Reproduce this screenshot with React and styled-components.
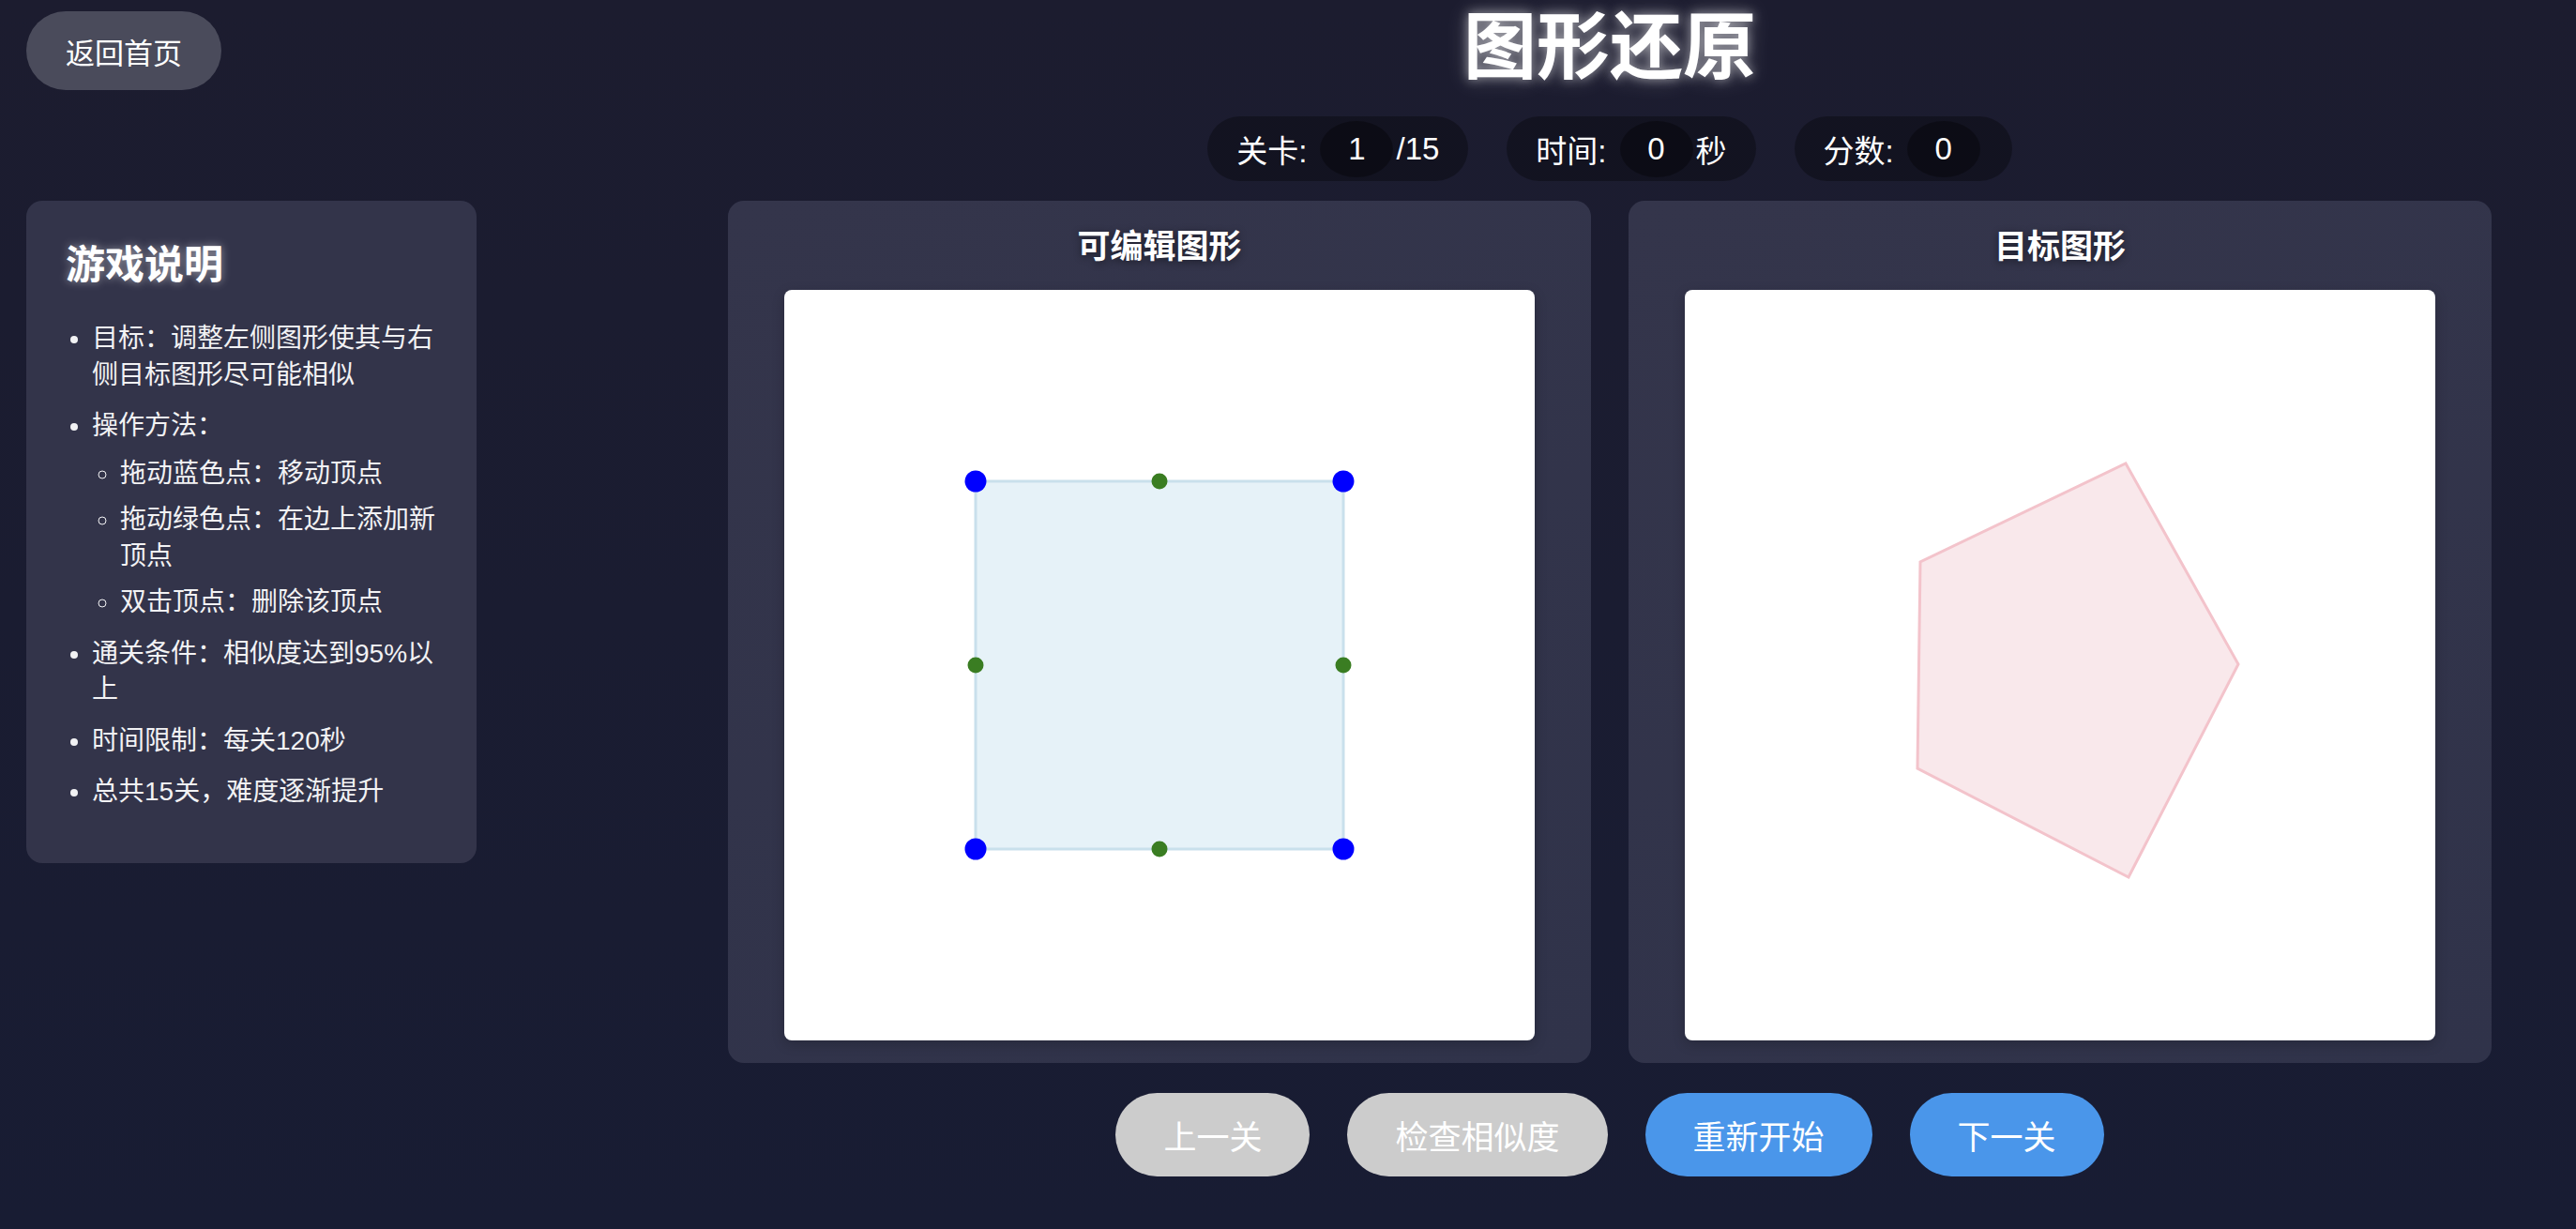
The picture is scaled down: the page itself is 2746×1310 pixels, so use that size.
import styled, { createGlobalStyle } from 'styled-components';

const GlobalStyle = createGlobalStyle`
    html, body {
        margin: 0;
        padding: 0;
    }
    body {
        background: linear-gradient(180deg, #1c1c2f 0%, #181c33 100%);
        min-height: 100vh;
        font-family: "Liberation Sans", "Noto Sans CJK SC", sans-serif;
        color: #ffffff;
    }
`;

const editableVertices = [
    [204, 204],
    [596, 204],
    [596, 596],
    [204, 596],
];

const targetVertices = [
    [470, 185],
    [590, 399],
    [473, 626],
    [248, 510],
    [251, 290],
];

const toPoints = (list) => list.map(p => p.join(',')).join(' ');

function midpoints(list){
    return list.map((p, i) => {
        const q = list[(i + 1) % list.length];
        return [(p[0] + q[0]) / 2, (p[1] + q[1]) / 2];
    });
}

function App(){
    const level = 1;
    const totalLevels = 15;
    const time = 0;
    const score = 0;

    return(
        <>
            <GlobalStyle />
            <Page>
                <BackButton>返回首页</BackButton>
                <Header>
                    <Title>图形还原</Title>
                    <Stats>
                        <StatPill>
                            关卡:<StatValue>{level}</StatValue>/{totalLevels}
                        </StatPill>
                        <StatPill>
                            时间:<StatValue>{time}</StatValue>秒
                        </StatPill>
                        <StatPill>
                            分数:<StatValue>{score}</StatValue>
                        </StatPill>
                    </Stats>
                </Header>

                <Instructions>
                    <InstructionsTitle>游戏说明</InstructionsTitle>
                    <RuleList>
                        <li>目标：调整左侧图形使其与右侧目标图形尽可能相似</li>
                        <li>
                            操作方法：
                            <SubList>
                                <li>拖动蓝色点：移动顶点</li>
                                <li>拖动绿色点：在边上添加新顶点</li>
                                <li>双击顶点：删除该顶点</li>
                            </SubList>
                        </li>
                        <li>通关条件：相似度达到95%以上</li>
                        <li>时间限制：每关120秒</li>
                        <li>总共15关，难度逐渐提升</li>
                    </RuleList>
                </Instructions>

                <Main>
                    <Boards>
                        <Board>
                            <BoardTitle>可编辑图形</BoardTitle>
                            <Canvas>
                                <svg width="800" height="800" viewBox="0 0 800 800">
                                    <polygon
                                        points={toPoints(editableVertices)}
                                        fill="#e6f2f8"
                                        stroke="#c9e0ec"
                                        strokeWidth="3"
                                    />
                                    {midpoints(editableVertices).map((p, i) => (
                                        <circle key={'m' + i} cx={p[0]} cy={p[1]} r="8.5" fill="#3a7d22" />
                                    ))}
                                    {editableVertices.map((p, i) => (
                                        <circle key={'v' + i} cx={p[0]} cy={p[1]} r="11.5" fill="#0000ff" />
                                    ))}
                                </svg>
                            </Canvas>
                        </Board>
                        <Board>
                            <BoardTitle>目标图形</BoardTitle>
                            <Canvas>
                                <svg width="800" height="800" viewBox="0 0 800 800">
                                    <polygon
                                        points={toPoints(targetVertices)}
                                        fill="#f9e8eb"
                                        stroke="#f3c3cb"
                                        strokeWidth="3"
                                    />
                                </svg>
                            </Canvas>
                        </Board>
                    </Boards>
                    <Controls>
                        <ActionButton disabled>上一关</ActionButton>
                        <ActionButton disabled>检查相似度</ActionButton>
                        <ActionButton>重新开始</ActionButton>
                        <ActionButton>下一关</ActionButton>
                    </Controls>
                </Main>
            </Page>
        </>
    );
}

const Page = styled.div`
    display: grid;
    grid-template-columns: 480px 1fr;
    align-content: start;
    column-gap: 206px;
    row-gap: 21px;
    padding: 12px 28px 0 28px;
    min-height: 100vh;
    box-sizing: border-box;
`;

const BackButton = styled.button`
    align-self: start;
    justify-self: start;
    height: 84px;
    padding: 0 42px;
    border: none;
    border-radius: 42px;
    background-color: #4a4b5b;
    color: #ffffff;
    font-family: "Liberation Sans", "Noto Sans CJK SC", sans-serif;
    font-size: 31px;
    cursor: pointer;
`;

const Header = styled.div`
    display: flex;
    flex-direction: column;
    align-items: center;
`;

const Title = styled.h1`
    margin: 0;
    font-size: 78px;
    line-height: 78px;
    font-weight: bold;
    color: #ffffff;
    text-shadow: 0 0 12px rgba(255, 255, 255, 0.55), 0 0 24px rgba(255, 255, 255, 0.25);
`;

const Stats = styled.div`
    display: flex;
    gap: 41px;
    margin-top: 34px;
`;

const StatPill = styled.div`
    display: flex;
    align-items: center;
    height: 69px;
    box-sizing: border-box;
    padding: 0 31px;
    border-radius: 35px;
    background-color: rgba(0, 0, 0, 0.3);
    font-size: 33px;
    color: #ffffff;
`;

const StatValue = styled.span`
    display: inline-flex;
    align-items: center;
    justify-content: center;
    min-width: 78px;
    height: 60px;
    margin: 0 3px 0 14px;
    border-radius: 50%;
    background-color: rgba(0, 0, 0, 0.32);
`;

const Instructions = styled.aside`
    align-self: start;
    padding: 44px 42px 56px 42px;
    border-radius: 17px;
    background-color: #33344a;
`;

const InstructionsTitle = styled.h2`
    margin: 0 0 34px 0;
    font-size: 42px;
    line-height: 50px;
    font-weight: bold;
    color: #ffffff;
    text-shadow: 0 0 10px rgba(255, 255, 255, 0.5);
`;

const RuleList = styled.ul`
    margin: 0;
    padding-left: 28px;
    font-size: 28px;
    line-height: 38.5px;
    color: #f2f2f4;

    > li {
        margin-bottom: 16px;
    }
    > li:last-child {
        margin-bottom: 0;
    }
`;

const SubList = styled.ul`
    margin: 12px 0 0 0;
    padding-left: 30px;
    list-style-type: circle;

    li {
        margin-bottom: 11px;
    }
`;

const Main = styled.main`
    display: flex;
    flex-direction: column;
    align-items: center;
`;

const Boards = styled.div`
    display: flex;
    gap: 40px;
`;

const Board = styled.section`
    display: flex;
    flex-direction: column;
    align-items: center;
    width: 920px;
    box-sizing: border-box;
    padding: 28px 0 24px 0;
    border-radius: 17px;
    background: linear-gradient(160deg, #34354b 0%, #30334a 100%);
`;

const BoardTitle = styled.h3`
    margin: 0 0 25px 0;
    font-size: 35px;
    line-height: 42px;
    font-weight: bold;
    color: #ffffff;
    text-shadow: 0 2px 8px rgba(0, 0, 0, 0.45);
`;

const Canvas = styled.div`
    width: 800px;
    height: 800px;
    border-radius: 8px;
    background-color: #ffffff;
    overflow: hidden;
    box-shadow: 0 4px 14px rgba(0, 0, 0, 0.2);

    svg {
        display: block;
    }
`;

const Controls = styled.div`
    display: flex;
    gap: 40px;
    margin-top: 32px;
`;

const ActionButton = styled.button`
    height: 89px;
    padding: 0 51px;
    border: none;
    border-radius: 45px;
    background-color: ${props => props.disabled ? '#cccccc' : '#4a96ea'};
    color: #ffffff;
    font-family: "Liberation Sans", "Noto Sans CJK SC", sans-serif;
    font-size: 35px;
    cursor: ${props => props.disabled ? 'not-allowed' : 'pointer'};
`;

export default App;
